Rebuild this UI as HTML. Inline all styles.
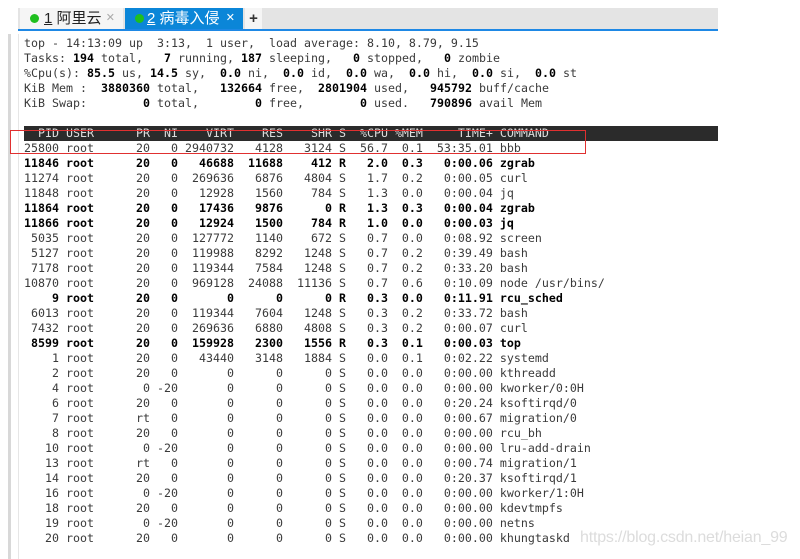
<!DOCTYPE html>
<html><head><meta charset="utf-8"><style>
html,body{margin:0;padding:0;width:800px;height:559px;overflow:hidden;background:#fff;font-family:"Liberation Sans","Noto Sans CJK SC",sans-serif;}
.side{position:absolute;left:8px;top:34px;width:3px;height:525px;background:#d8d8d8;}
.side2{position:absolute;left:18px;top:34px;width:1px;height:525px;background:#e6e6e6;}
.tabbar{position:absolute;left:18px;top:8px;width:700px;height:22px;background:#e4e4e4;}
.blue{position:absolute;left:18px;top:29px;width:700px;height:2px;background:#1e88e5;}
.tab{position:absolute;top:8px;height:21px;font-size:15px;line-height:21px;}
.t1{left:20px;width:103px;background:#f5f5f5;color:#222;}
.t2{left:125px;width:118px;background:#0b86d8;color:#fff;}
.t3{left:245px;width:17px;background:#f5f5f5;color:#333;text-align:center;font-weight:bold;}
.dot{position:absolute;left:10px;top:6px;width:9px;height:9px;border-radius:50%;background:#1fbf1f;}
.x{position:absolute;right:8px;top:0;font-size:11px;}
pre{position:absolute;left:24px;top:36px;margin:0;font-family:"DejaVu Sans Mono",monospace;font-size:11.63px;line-height:15px;color:#3a3a3a;}
b{color:#000;}
.hdr{position:absolute;left:24px;top:126px;width:694px;height:15px;background:#2b2b2b;}
.hl{color:#ddd;}
.red{position:absolute;left:10px;top:130px;width:574px;height:22px;border:1px solid #e03030;}
.wm{position:absolute;left:580px;top:529px;font-size:16px;color:#dcdcdc;letter-spacing:-0.2px;}
</style></head><body>
<div class="side"></div><div class="side2"></div>
<div class="tabbar"></div>
<div class="tab t1"><span class="dot"></span><span style="position:absolute;left:24px"><u>1</u> 阿里云</span><span class="x" style="color:#aaa">✕</span></div>
<div class="tab t2"><span class="dot"></span><span style="position:absolute;left:22px"><u>2</u> 病毒入侵</span><span class="x">✕</span></div>
<div class="tab t3">+</div>
<div class="blue"></div>
<div class="hdr"></div>
<pre>top - 14:13:09 up  3:13,  1 user,  load average: 8.10, 8.79, 9.15
Tasks: <b>194</b> total,   <b>7</b> running, <b>187</b> sleeping,   <b>0</b> stopped,   <b>0</b> zombie
%Cpu(s): <b>85.5</b> us, <b>14.5</b> sy,  <b>0.0</b> ni,  <b>0.0</b> id,  <b>0.0</b> wa,  <b>0.0</b> hi,  <b>0.0</b> si,  <b>0.0</b> st
KiB Mem :  <b>3880360</b> total,   <b>132664</b> free,  <b>2801904</b> used,   <b>945792</b> buff/cache
KiB Swap:        <b>0</b> total,        <b>0</b> free,        <b>0</b> used.   <b>790896</b> avail Mem

<span class="hl">  PID USER      PR  NI    VIRT    RES    SHR S  %CPU %MEM     TIME+ COMMAND</span>
25800 root      20   0 2940732   4128   3124 S  56.7  0.1  53:35.01 bbb
<b>11846 root      20   0   46688  11688    412 R   2.0  0.3   0:00.06 zgrab</b>
11274 root      20   0  269636   6876   4804 S   1.7  0.2   0:00.05 curl
11848 root      20   0   12928   1560    784 S   1.3  0.0   0:00.04 jq
<b>11864 root      20   0   17436   9876      0 R   1.3  0.3   0:00.04 zgrab</b>
<b>11866 root      20   0   12924   1500    784 R   1.0  0.0   0:00.03 jq</b>
 5035 root      20   0  127772   1140    672 S   0.7  0.0   0:08.92 screen
 5127 root      20   0  119988   8292   1248 S   0.7  0.2   0:39.49 bash
 7178 root      20   0  119344   7584   1248 S   0.7  0.2   0:33.20 bash
10870 root      20   0  969128  24088  11136 S   0.7  0.6   0:10.09 node /usr/bins/
<b>    9 root      20   0       0      0      0 R   0.3  0.0   0:11.91 rcu_sched</b>
 6013 root      20   0  119344   7604   1248 S   0.3  0.2   0:33.72 bash
 7432 root      20   0  269636   6880   4808 S   0.3  0.2   0:00.07 curl
<b> 8599 root      20   0  159928   2300   1556 R   0.3  0.1   0:00.03 top</b>
    1 root      20   0   43440   3148   1884 S   0.0  0.1   0:02.22 systemd
    2 root      20   0       0      0      0 S   0.0  0.0   0:00.00 kthreadd
    4 root       0 -20       0      0      0 S   0.0  0.0   0:00.00 kworker/0:0H
    6 root      20   0       0      0      0 S   0.0  0.0   0:20.24 ksoftirqd/0
    7 root      rt   0       0      0      0 S   0.0  0.0   0:00.67 migration/0
    8 root      20   0       0      0      0 S   0.0  0.0   0:00.00 rcu_bh
   10 root       0 -20       0      0      0 S   0.0  0.0   0:00.00 lru-add-drain
   13 root      rt   0       0      0      0 S   0.0  0.0   0:00.74 migration/1
   14 root      20   0       0      0      0 S   0.0  0.0   0:20.37 ksoftirqd/1
   16 root       0 -20       0      0      0 S   0.0  0.0   0:00.00 kworker/1:0H
   18 root      20   0       0      0      0 S   0.0  0.0   0:00.00 kdevtmpfs
   19 root       0 -20       0      0      0 S   0.0  0.0   0:00.00 netns
   20 root      20   0       0      0      0 S   0.0  0.0   0:00.00 khungtaskd</pre>
<div class="red"></div>
<div class="wm">https://blog.csdn.net/heian_99</div>
</body></html>
